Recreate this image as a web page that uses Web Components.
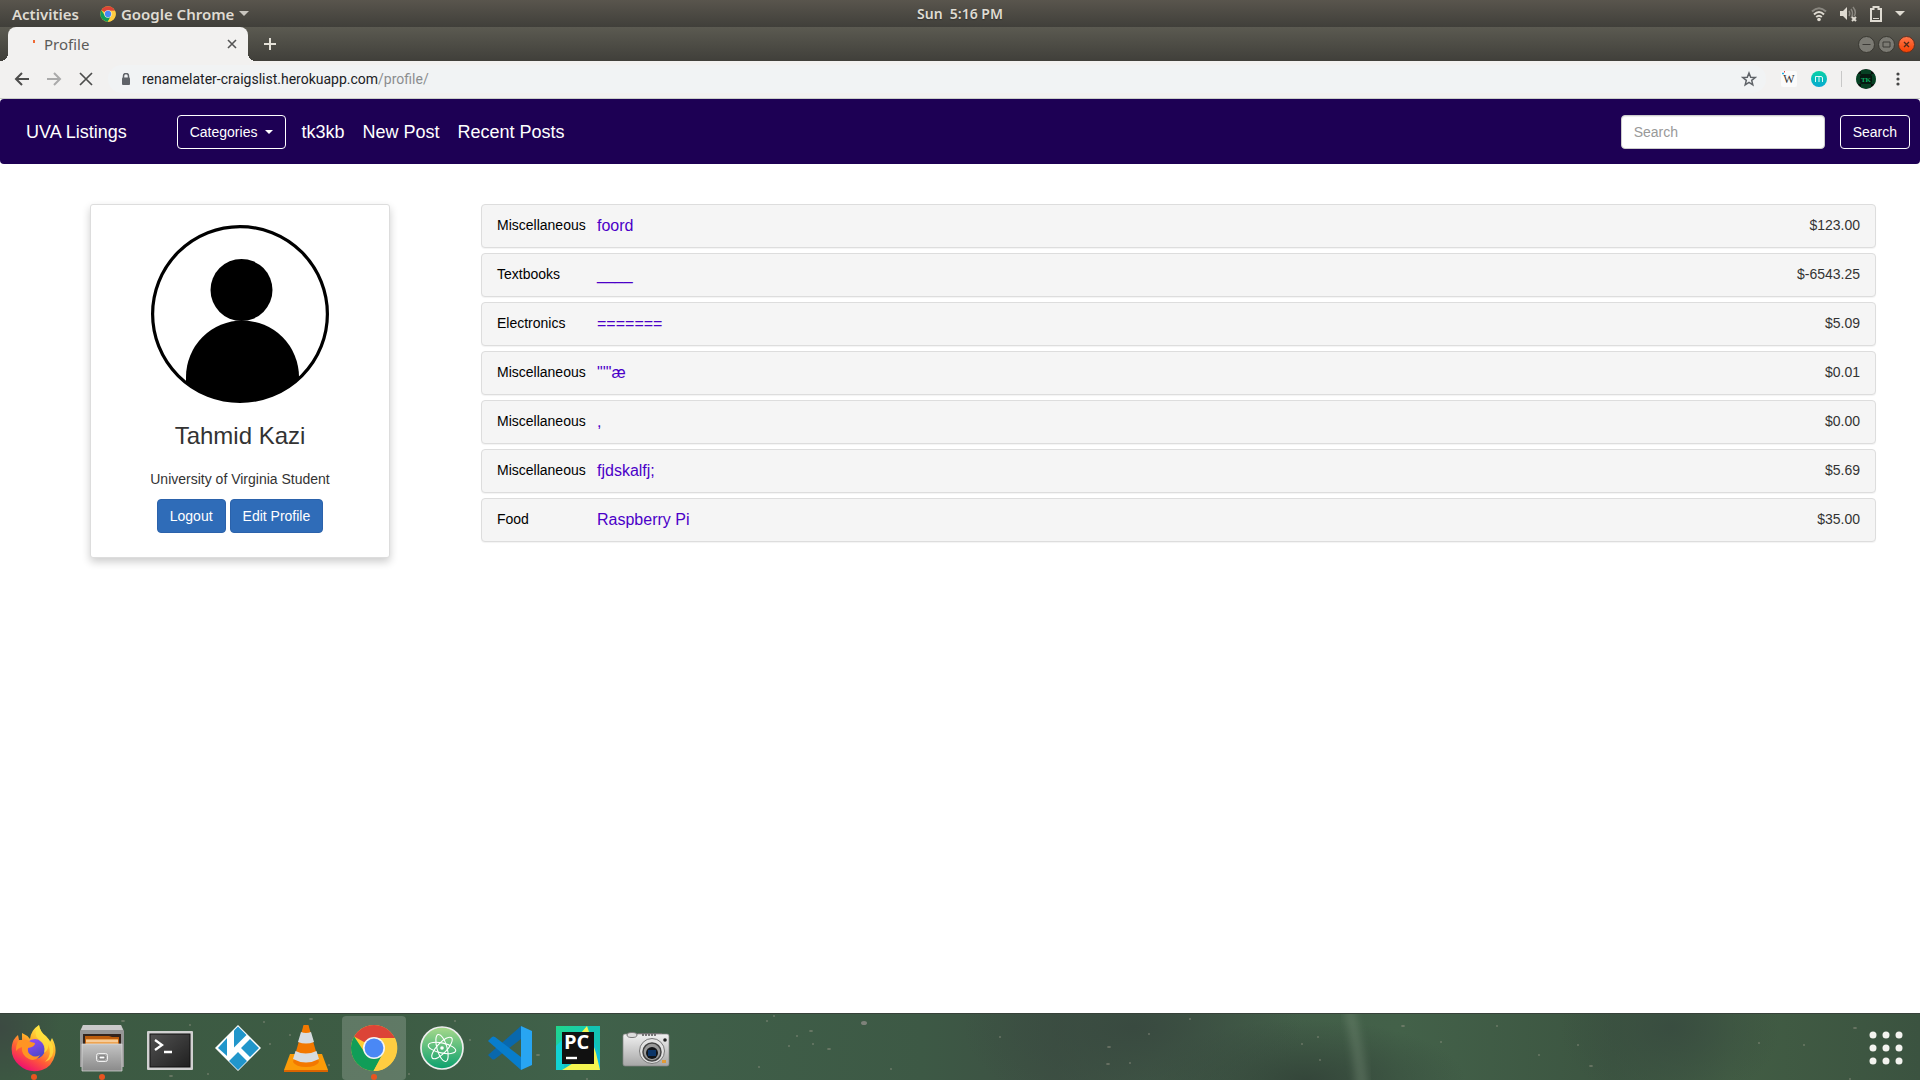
<!DOCTYPE html>
<html lang="en">
<head>
<meta charset="utf-8">
<title>Profile</title>
<style>
body{margin:0;background:#fff;color:#333;font-family:"Liberation Sans",Arial,sans-serif;font-size:14px;line-height:20px}
</style>
</head>
<body>
<desktop-shell></desktop-shell>
<script>
function define(name, html, setup) {
  const template = document.createElement('template');
  template.innerHTML = html;
  customElements.define(name, class extends HTMLElement {
    constructor() {
      super();
      this.attachShadow({ mode: 'open' }).append(template.content.cloneNode(true));
    }
    connectedCallback() { if (setup) setup(this, this.shadowRoot); }
  });
}
const reset = `:host,*{box-sizing:border-box}button{font:inherit;color:inherit;background:none;border:0;margin:0;padding:0;cursor:pointer}a{color:inherit;text-decoration:none}svg{display:block;flex:none}`;

define('chrome-logo', `<style>:host{display:block}svg{display:block;width:100%;height:100%}</style>
<svg viewBox="0 0 48 48" aria-hidden="true"><circle cx="24" cy="24" r="23" fill="#fc3"/>
<path d="M4.1 12.5A23 23 0 0 1 43.9 12.5V14H24L14 18Z" fill="#dc4437"/><path d="M43.9 12.5A23 23 0 0 1 45 14H24V12.5Z" fill="#dc4437"/>
<path d="M4.1 12.5A23 23 0 0 0 23.5 47L34 29L24 33L15 29Z" fill="#109d58"/><path d="M45 14A23 23 0 0 1 23.5 47L33 29L33 19L24 14Z" fill="#ffcd41"/>
<circle cx="24" cy="24" r="11" fill="#f4f4f4"/><circle cx="24" cy="24" r="9.4" fill="#4a88f5"/></svg>`);

define('system-bar', `<style>${reset}
:host{display:grid;grid-template-columns:1fr auto 1fr;align-items:center;height:27px;padding:0 12px;background:linear-gradient(#59554d,#403f3a);color:#dfdbd2;font:600 15px/20px "Noto Sans","Open Sans",sans-serif;text-shadow:0 1px 1px #2228}
.l,.r,.app{display:flex;align-items:center}.l{gap:21px}.app{gap:5px}.r{justify-content:flex-end;gap:13px;padding-right:3px}
chrome-logo{width:16px;height:16px}time{font-size:14px;white-space:pre}
</style>
<div class="l"><button>Activities</button><button class="app"><chrome-logo></chrome-logo><span>Google Chrome</span><svg width="10" height="6"><path d="M0 0h10L5 5Z" fill="#c9c6bf"/></svg></button></div>
<time>Sun  5:16 PM</time>
<div class="r">
<svg width="16" height="16" viewBox="0 0 16 16" fill="none" stroke="#dfdbd2" stroke-width="2"><path d="M1 5.500Q8-1 15 5.500" stroke="#89867f"/><path d="M3 8.500q5-5 10 0M5.200 11q2.800-2.500 5.600 0"/><circle cx="8" cy="13.500" r="1.800" fill="#dfdbd2" stroke="none"/></svg>
<svg width="17" height="16" viewBox="0 0 17 16" fill="none" stroke="#89867f" stroke-width="1.500"><path d="M0 5h3l4-4v13l-4-4H0Z" fill="#dfdbd2" stroke="none"/><path d="M9 5q1.500 2.500 0 5M11 3q3 4.500 0 9M13 1q4 5 1 9"/><path d="M12 11l4 4m0-4l-4 4" stroke="#dfdbd2" stroke-width="2"/></svg>
<svg width="12" height="16" viewBox="0 0 12 16"><path d="M1 3h2.500V1h5v2H11v12H1Z" fill="none" stroke="#dfdbd2" stroke-width="2"/><path d="M3 12h6v1H3Z" fill="#dfdbd2"/></svg>
<svg width="10" height="6"><path d="M0 0h10L5 5Z" fill="#dfdbd2"/></svg></div>`);

define('browser-tabs', `<style>${reset}
:host{display:flex;align-items:center;height:34px;padding:0 5px 0 8px;background:linear-gradient(#5b5a51,#403f3a);font:15px/20px "Noto Sans","Open Sans",sans-serif}
.tab{position:relative;display:flex;align-items:center;width:240px;height:34px;padding:0 10px 0 25px;background:#f2f1f0;border-radius:8px 8px 0 0;color:#5b5b59}
.tab::before,.tab::after{content:"";position:absolute;bottom:0;width:8px;height:8px}
.tab::before{right:100%;background:radial-gradient(circle at 0 0,transparent 8px,#f2f1f0 8px)}
.tab::after{left:100%;background:radial-gradient(circle at 100% 0,transparent 8px,#f2f1f0 8px)}
.tab span{flex:1;padding-left:9px}.new{margin-left:16px}.win{display:flex;gap:3px;margin-left:auto}
</style>
<div class="tab"><svg width="2" height="8"><rect width="2" height="3" fill="#f06a35"/></svg><span>Profile</span><button aria-label="Close tab"><svg width="12" height="12" viewBox="0 0 12 12"><path d="M2 2l8 8M10 2l-8 8" stroke="#555" stroke-width="1.600"/></svg></button></div>
<button class="new" aria-label="New tab"><svg width="12" height="12"><path d="M6 0v12M0 6h12" stroke="#e4e1d8" stroke-width="2"/></svg></button>
<div class="win">
<button aria-label="Minimize"><svg width="17" height="17"><circle cx="8.500" cy="8.500" r="8" fill="#7b7a73" stroke="#393832"/><path d="M4.500 8.500h8" stroke="#3c3b37"/></svg></button>
<button aria-label="Maximize"><svg width="17" height="17"><circle cx="8.500" cy="8.500" r="8" fill="#7b7a73" stroke="#393832"/><path d="M5 6h7v5H5Z" fill="none" stroke="#3c3b37"/></svg></button>
<button aria-label="Close"><svg width="17" height="17"><defs><linearGradient id="o" x2="0" y2="1"><stop stop-color="#ff794d"/><stop offset="1" stop-color="#f43f00"/></linearGradient></defs><circle cx="8.500" cy="8.500" r="8" fill="url(#o)" stroke="#603020"/><path d="M6 6l5 5m0-5l-5 5" stroke="#4c2a1a" stroke-width="1.300"/></svg></button></div>`);

define('browser-toolbar', `<style>${reset}
:host{display:flex;align-items:center;height:38px;padding:0 14px 2px 14px;background:#f2f1f0;border-bottom:1px solid #c9cdc8;font:14px/20px "Noto Sans","Open Sans",sans-serif}
.nav{display:flex;gap:16px}.box{flex:1;display:flex;align-items:center;gap:11px;height:28px;margin-left:14px;padding:0 9px 0 13px;border-radius:14px;background:#f1f3f4}
.url{flex:1;color:#8b8d8f;font-family:Roboto,"Noto Sans",sans-serif;outline:0}.url b{font-weight:400;color:#202124}
.ext{display:flex;align-items:center;gap:14px;margin-left:15px}
</style>
<div class="nav">
<button aria-label="Back"><svg width="16" height="16" fill="none" stroke="#4d4d4c" stroke-width="2"><path d="M15 8H2M8 2L2 8l6 6"/></svg></button>
<button aria-label="Forward"><svg width="16" height="16" fill="none" stroke="#aaa" stroke-width="2"><path d="M1 8h13M8 2l6 6-6 6"/></svg></button>
<button aria-label="Stop"><svg width="16" height="16" stroke="#4d4d4c" stroke-width="1.700"><path d="M2 2l12 12M14 2L2 14"/></svg></button></div>
<div class="box"><svg width="10" height="12"><path d="M2.500 5V3a2.500 2.500 0 0 1 5 0v2" fill="none" stroke="#5f6368" stroke-width="1.500"/><rect x="1" y="4.500" width="8" height="7.500" rx="1" fill="#5f6368"/></svg>
<div class="url" role="textbox" aria-label="Address" contenteditable="true" spellcheck="false"><b>renamelater-craigslist.herokuapp.com</b>/profile/</div>
<button aria-label="Bookmark"><svg width="16" height="16" viewBox="0 0 16 16"><path d="M8 2l1.700 4.200 4.500.3-3.500 2.900 1.100 4.400L8 11.400l-3.800 2.400 1.100-4.400L1.800 6.500l4.500-.3Z" fill="none" stroke="#5f6368" stroke-width="1.500"/></svg></button></div>
<div class="ext">
<svg width="16" height="16"><rect width="16" height="16" rx="2" fill="#fbfbfb"/><text x="8" y="12" text-anchor="middle" font-family="Liberation Serif" font-size="12" fill="#333">W</text><path d="M1 2.500h2" stroke="#20aee5" stroke-width="1.500"/><path d="M3.500 0v1.500" stroke="#e24b4b"/></svg>
<svg width="16" height="16"><defs><linearGradient id="m" x2="0" y2="1"><stop stop-color="#08d3a5"/><stop offset="1" stop-color="#08a8d2"/></linearGradient></defs><circle cx="8" cy="8" r="8" fill="url(#m)"/><path d="M4.500 11V5.500H8V11M8 5.500h2q1.500 0 1.500 1.500v4" fill="none" stroke="#fff" stroke-width=".9"/></svg>
<svg width="1" height="16"><rect width="1" height="16" fill="#c8c8c8"/></svg>
<svg width="20" height="20" viewBox="0 0 20 20"><circle cx="10" cy="10" r="10" fill="#06110c"/><path d="M6 1v4m2-4v4m2-5v5m2-4v4m2-4v4M6 15v4m2-4v4m2-4v5m2-5v4m2-4v4M1 6h4M0 8h4m-4 2h4m-4 2h4m-3 2h4M15 6h4m-3 2h4m-4 2h4m-4 2h4m-5 2h4" stroke="#087b42" stroke-width=".9"/><rect x="4.500" y="5" width="11" height="10" fill="#061a11"/><text x="10" y="12.500" text-anchor="middle" font-family="Liberation Serif" font-weight="700" font-size="7" fill="#0bb163">TK</text></svg>
<button aria-label="Menu"><svg width="16" height="16" fill="#454545"><circle cx="8" cy="3" r="1.600"/><circle cx="8" cy="8" r="1.600"/><circle cx="8" cy="13" r="1.600"/></svg></button></div>`);

define('site-nav', `<style>${reset}
:host{display:flex;align-items:center;justify-content:space-between;height:65px;padding:0 10px 0 26px;background:#1d0054;border-radius:4px;color:#fff}
nav,form{display:flex;align-items:center}form{gap:15px}.brand{font-size:18px;margin-right:50px}.links{display:flex;gap:18px;margin-left:15px;font-size:18px}
.btn{display:flex;align-items:center;gap:8px;height:34px;padding:0 12px;border:1px solid #fff;border-radius:4px}
input{width:204px;height:34px;padding:6px 12px;border:1px solid #ccc;border-radius:4px;background:#fff;color:#555;font:inherit;box-shadow:inset 0 1px 1px #00000013}
input::placeholder{color:#999;opacity:1}
</style>
<nav><a class="brand" href="#">UVA Listings</a><button class="btn" aria-haspopup="true">Categories <svg width="8" height="4"><path d="M0 0h8L4 4Z" fill="#fff"/></svg></button><div class="links"><a href="#">tk3kb</a><a href="#">New Post</a><a href="#">Recent Posts</a></div></nav>
<form><input type="text" placeholder="Search" aria-label="Search"><button class="btn" type="button">Search</button></form>`);

define('profile-card', `<style>${reset}
:host{display:flex;flex-direction:column;align-items:center;width:300px;padding:20px 20px 24px;border:1px solid #ddd;border-radius:3px;background:#fff;box-shadow:0 4px 8px #0003}
h3{margin:20px 0 20px;font-weight:400;font-size:24px;line-height:26px}p{margin:0 0 10px}
.actions{display:flex;gap:4px}a{padding:6px 12px;border:1px solid #2b62ab;border-radius:4px;background:#2f6cb8;color:#fff}
</style>
<svg width="178" height="178" viewBox="1 1 178 178" role="img" aria-label="Profile picture"><defs><clipPath id="c"><circle cx="90" cy="90" r="88"/></clipPath></defs><circle cx="90" cy="90" r="87.400" fill="none" stroke="#000" stroke-width="3.200"/><g clip-path="url(#c)"><circle cx="91.500" cy="66" r="31"/><path d="M36 180V153a56.500 56.500 0 0 1 113 0v27Z"/></g></svg>
<h3><slot name="name"></slot></h3><p><slot></slot></p><div class="actions"><a href="#">Logout</a><a href="#">Edit Profile</a></div>`);

define('post-row', `<style>${reset}
:host{display:flex;align-items:flex-start;padding:10px 15px;border:1px solid #ddd;border-radius:4px;background:#f5f5f5;box-shadow:0 1px 1px #0000000d}
.cat{width:100px;color:#000}a{flex:1;color:#4b00c8;font-size:16px;line-height:22px}
</style><span class="cat"><slot name="category"></slot></span><a href="#"><slot></slot></a><span><slot name="price"></slot></span>`);

define('profile-page', `<style>${reset}
:host{display:flex;flex-direction:column;background:#fff}
main{display:flex;align-items:flex-start;padding:40px 44px 40px 0}
aside{flex:none;width:25%;min-width:480px;display:flex;justify-content:center}section{flex:1;display:flex;flex-direction:column;gap:5px}
main{gap:1px}
</style><site-nav></site-nav><main><aside><profile-card><span slot="name">Tahmid Kazi</span>University of Virginia Student</profile-card></aside><section></section></main>`,
(el, root) => {
  const posts = [['Miscellaneous','foord','$123.00'],['Textbooks','____','$-6543.25'],['Electronics','=======','$5.09'],['Miscellaneous','"\'"æ','$0.01'],['Miscellaneous',',','$0.00'],['Miscellaneous','fjdskalfj;','$5.69'],['Food','Raspberry Pi','$35.00']];
  root.querySelector('section').innerHTML = posts.map(([c, t, p]) => `<post-row><span slot="category">${c}</span>${t}<span slot="price">${p}</span></post-row>`).join('');
});

define('dock-item', `<style>${reset}
:host{display:block}button{position:relative;display:grid;place-items:center;width:64px;height:64px;border-radius:4px}
:host([active]) button{background:#ffffff2e}
:host([running]) button::after{content:"";position:absolute;bottom:0;left:29px;width:6px;height:6px;border-radius:50%;background:#e95420}
</style><button><slot></slot></button>`, (el, root) => root.querySelector('button').setAttribute('aria-label', el.getAttribute('label')));

define('dock-bar', `<style>${reset}
:host{position:relative;display:flex;align-items:center;gap:4px;height:67px;padding:1px 2px 0;overflow:hidden;border-top:1px solid #37423a;
background:radial-gradient(ellipse 170px 90px at 59% 20%,#394a40,transparent),radial-gradient(ellipse 160px 60px at 68% 100%,#34463a,transparent),radial-gradient(ellipse 110px 80px at 87% 20%,#394d40,transparent),radial-gradient(ellipse 60px 60px at 0 20%,#3c4a42,transparent),linear-gradient(90deg,#3c5942,#3d5c44 20%,#40614a 30%,#3d5945 48%,#3d5043 55%,#425d48 64%,#436149 73%,#3c5541 84%,#425d44 90%,#3b5340)}
.specks{position:absolute;inset:0;width:100%;height:100%}dock-item{position:relative}dock-item:last-of-type{margin-left:auto}chrome-logo{width:48px;height:48px}
</style>
<svg class="specks" aria-hidden="true"><defs><filter id="b"><feGaussianBlur stdDeviation="4"/></filter></defs><path d="M1344-5q10 40 12 80h12q-4-40-14-80Z" fill="#7c917c" opacity=".4" filter="url(#b)"/></svg>
<dock-item label="Firefox" running><svg width="48" height="48" viewBox="0 0 48 48"><defs><linearGradient id="f" x1=".8" y1=".1" x2=".3" y2="1"><stop stop-color="#fff14c"/><stop offset=".35" stop-color="#ffac28"/><stop offset=".65" stop-color="#ff5938"/><stop offset="1" stop-color="#ed0876"/></linearGradient><linearGradient id="p" x2=".5" y2="1"><stop stop-color="#9c4bff"/><stop offset="1" stop-color="#4d48c7"/></linearGradient></defs><path d="M29 1q1 7 7 11 3 3 4 6l2-4q5 9 3 17-3 12-13 15Q19 50 9 41 0 33 2 21q1-6 6-10l1 5 3 0V9q5 2 8 6 1-9 9-14Z" fill="url(#f)"/><circle cx="25" cy="25" r="10" fill="url(#p)"/><path d="M8 17q7-3 13 1l4 1q0 4-7 5-1 5 3 7 4 3 9 0-4 7-11 4-8-4-7-12-4 1-6 4 0-6 2-10Z" fill="#ff9423"/><path d="M29 1q-7 9 0 15 7 5 5 13 5-3 4-9 5 11-3 18 10-4 8-15-1-5-7-10-6-5-7-12Z" fill="#ffe33e" opacity=".75"/></svg></dock-item>
<dock-item label="Files" running><svg width="48" height="48" viewBox="0 0 48 48"><defs><linearGradient id="g" x2="0" y2="1"><stop stop-color="#c4c4c4"/><stop offset="1" stop-color="#8a8a8a"/></linearGradient></defs><path d="M5 1h38l3 6v36H2V7Z" fill="#969696"/><path d="M5 1h38l2 5H3Z" fill="#c9c9c9"/><path d="M5 10h38v11H5Z" fill="#33251e"/><path d="M7 12h24l3 1h7v8H7Z" fill="#bd5d0c"/><path d="M8 15h32v6H8Z" fill="#eda452"/><path d="M8 17h32" stroke="#fff2dd"/><path d="M4 20h40v27H4Z" fill="url(#g)" stroke="#dedede" stroke-width=".7"/><rect x="18.500" y="29.500" width="11" height="8" rx="2" fill="#aaa" stroke="#f0f0f0"/><path d="M21 32h6v3h-6Z" fill="#fff" stroke="#6a6a6a"/></svg></dock-item>
<dock-item label="Terminal"><svg width="48" height="48" viewBox="0 0 48 48"><defs><linearGradient id="t" x2="1" y2="1"><stop stop-color="#515151"/><stop offset="1" stop-color="#202020"/></linearGradient></defs><rect x="1" y="7" width="46" height="39" rx="1" fill="#d1d1d1"/><rect x="4" y="10" width="40" height="33" fill="url(#t)" stroke="#111"/><path d="M9 16l7 5-7 5M18 28h8" fill="none" stroke="#fff" stroke-width="2.300"/></svg></dock-item>
<dock-item label="Kodi"><svg width="48" height="48" viewBox="0 0 48 48"><path d="M24 1l23 23-23 23L1 24Z" fill="#fff"/><path d="M24 2.500l8.500 8.500L20 23.500V6.500Z" fill="#2196cb"/><path d="M13 14v18L4 24Z" fill="#2196cb"/><path d="M36 15l9 9-9 9-9-9ZM24 28l9 9-9 9-9-9Z" fill="#2196cb"/></svg></dock-item>
<dock-item label="VLC"><svg width="48" height="48" viewBox="0 0 48 48"><path d="M8 30h32l6 16v2H2v-2Z" fill="#fb9b08"/><path d="M2 46h44v2H2Z" fill="#db6400"/><path d="M22 1h4q1 0 1 2l10 35q-3 5-13 5t-13-5L21 3q0-2 1-2Z" fill="#f37800"/><path d="M19 8q5 2 10 0l3 10q-8 3-16 0ZM13.500 27q10 5 21 0l2.500 8q-13 7-26 0Z" fill="#d7dce1"/></svg></dock-item>
<dock-item label="Google Chrome" active running><chrome-logo></chrome-logo></dock-item>
<dock-item label="Atom"><svg width="48" height="48" viewBox="0 0 48 48"><defs><linearGradient id="a" x2="0" y2="1"><stop stop-color="#a8d98b"/><stop offset="1" stop-color="#0ba06e"/></linearGradient></defs><circle cx="24" cy="24" r="21" fill="url(#a)" stroke="#eee" stroke-width="1.700"/><g fill="none" stroke="#fff" stroke-width="1.100"><ellipse cx="24" cy="24" rx="14" ry="5" transform="rotate(12 24 24)"/><ellipse cx="24" cy="24" rx="14" ry="5" transform="rotate(74 24 24)"/><ellipse cx="24" cy="24" rx="14" ry="5" transform="rotate(133 24 24)"/></g><circle cx="24" cy="24" r="1.800" fill="#fff"/></svg></dock-item>
<dock-item label="Visual Studio Code"><svg width="48" height="48" viewBox="0 0 48 48"><path d="M2 31l4 4q1 1 3 0L35 15V2Z" fill="#0968ad"/><path d="M2 17l4-4q1-1 3 0l26 20v13Z" fill="#087dcc"/><path d="M35 2l11 5v34l-11 5Z" fill="#28a5f2"/></svg></dock-item>
<dock-item label="PyCharm"><svg width="48" height="48" viewBox="0 0 48 48"><defs><linearGradient id="y" x2="1" y2="1"><stop stop-color="#21d789"/><stop offset="1" stop-color="#07b8f2"/></linearGradient></defs><path d="M2 2h44v44H2Z" fill="url(#y)"/><path d="M2 22l8-8v32H2Z" fill="#12d2d3"/><path d="M26 10l7-8 9 27 4 17H8l13-8Z" fill="#f4f550"/><path d="M34 2h12v30Z" fill="#12c3b3"/><path d="M8 8h32v32H8Z" fill="#111"/><text x="10" y="25" font-family="Open Sans" font-weight="700" font-size="20" fill="#fff">PC</text><path d="M12 34h11" stroke="#fff" stroke-width="2.400"/></svg></dock-item>
<dock-item label="Camera"><svg width="48" height="48" viewBox="0 0 48 48"><defs><linearGradient id="k" x2="0" y2="1"><stop stop-color="#f1f1f1"/><stop offset="1" stop-color="#a6a6a6"/></linearGradient></defs><path d="M16 9h24v4H16Z" fill="#676767"/><rect x="1" y="10" width="46" height="32" rx="2" fill="url(#k)" stroke="#858585" stroke-width=".7"/><ellipse cx="10" cy="11" rx="5" ry="2.500" fill="#ddd" stroke="#777"/><path d="M20 11h14" stroke="#555" stroke-width="1.500" stroke-dasharray="2 1"/><circle cx="30" cy="27" r="12.500" fill="#e2e2e2" stroke="#777"/><circle cx="30" cy="28" r="9" fill="#999" stroke="#444" stroke-width="1.500"/><circle cx="30" cy="29" r="6" fill="#101318"/><path d="M26 26h8v6h-8Z" fill="#0c3568"/><circle cx="43" cy="16" r="1.800" fill="#222"/><path d="M40 36h4v3h-4Z" fill="#e19b35"/></svg></dock-item>
<dock-item label="Show Applications"><svg width="34" height="34" fill="#f3f3ef"><circle cx="4" cy="4" r="3.500"/><circle cx="17" cy="4" r="3.500"/><circle cx="30" cy="4" r="3.500"/><circle cx="4" cy="17" r="3.500"/><circle cx="17" cy="17" r="3.500"/><circle cx="30" cy="17" r="3.500"/><circle cx="4" cy="30" r="3.500"/><circle cx="17" cy="30" r="3.500"/><circle cx="30" cy="30" r="3.500"/></svg></dock-item>`,
(el, root) => {
  const specks = [[123,7],[190,11],[264,8],[290,21],[171,62],[208,60],[270,30],[329,51],[311,5],[455,7],[470,26],[409,60],[538,41],[587,65],[774,2],[767,7],[811,17],[797,22],[789,32],[813,30],[829,35],[759,53],[891,55],[1000,23],[1108,50],[1130,49],[1190,5],[1149,20],[1109,33],[1318,23],[1302,30],[1320,46],[1403,12],[1441,28],[1497,12],[1539,41],[1591,52],[1578,31],[1759,29],[1804,31],[1855,14],[1850,65]];
  root.querySelector('.specks').insertAdjacentHTML('beforeend', specks.map(([x, y], i) => `<ellipse cx="${x}" cy="${y}" rx="${i % 4 ? 1 : 2}" ry="1" fill="#a19e91" opacity=".45"/>`).join('') + '<ellipse cx="864" cy="9" rx="3" ry="2" fill="#8f8c87" opacity=".8"/>');
});

define('desktop-shell', `<style>:host{display:flex;flex-direction:column;min-height:100vh}profile-page{flex:1}</style>
<system-bar></system-bar><browser-tabs></browser-tabs><browser-toolbar></browser-toolbar><profile-page></profile-page><dock-bar></dock-bar>`);
</script>
</body>
</html>
